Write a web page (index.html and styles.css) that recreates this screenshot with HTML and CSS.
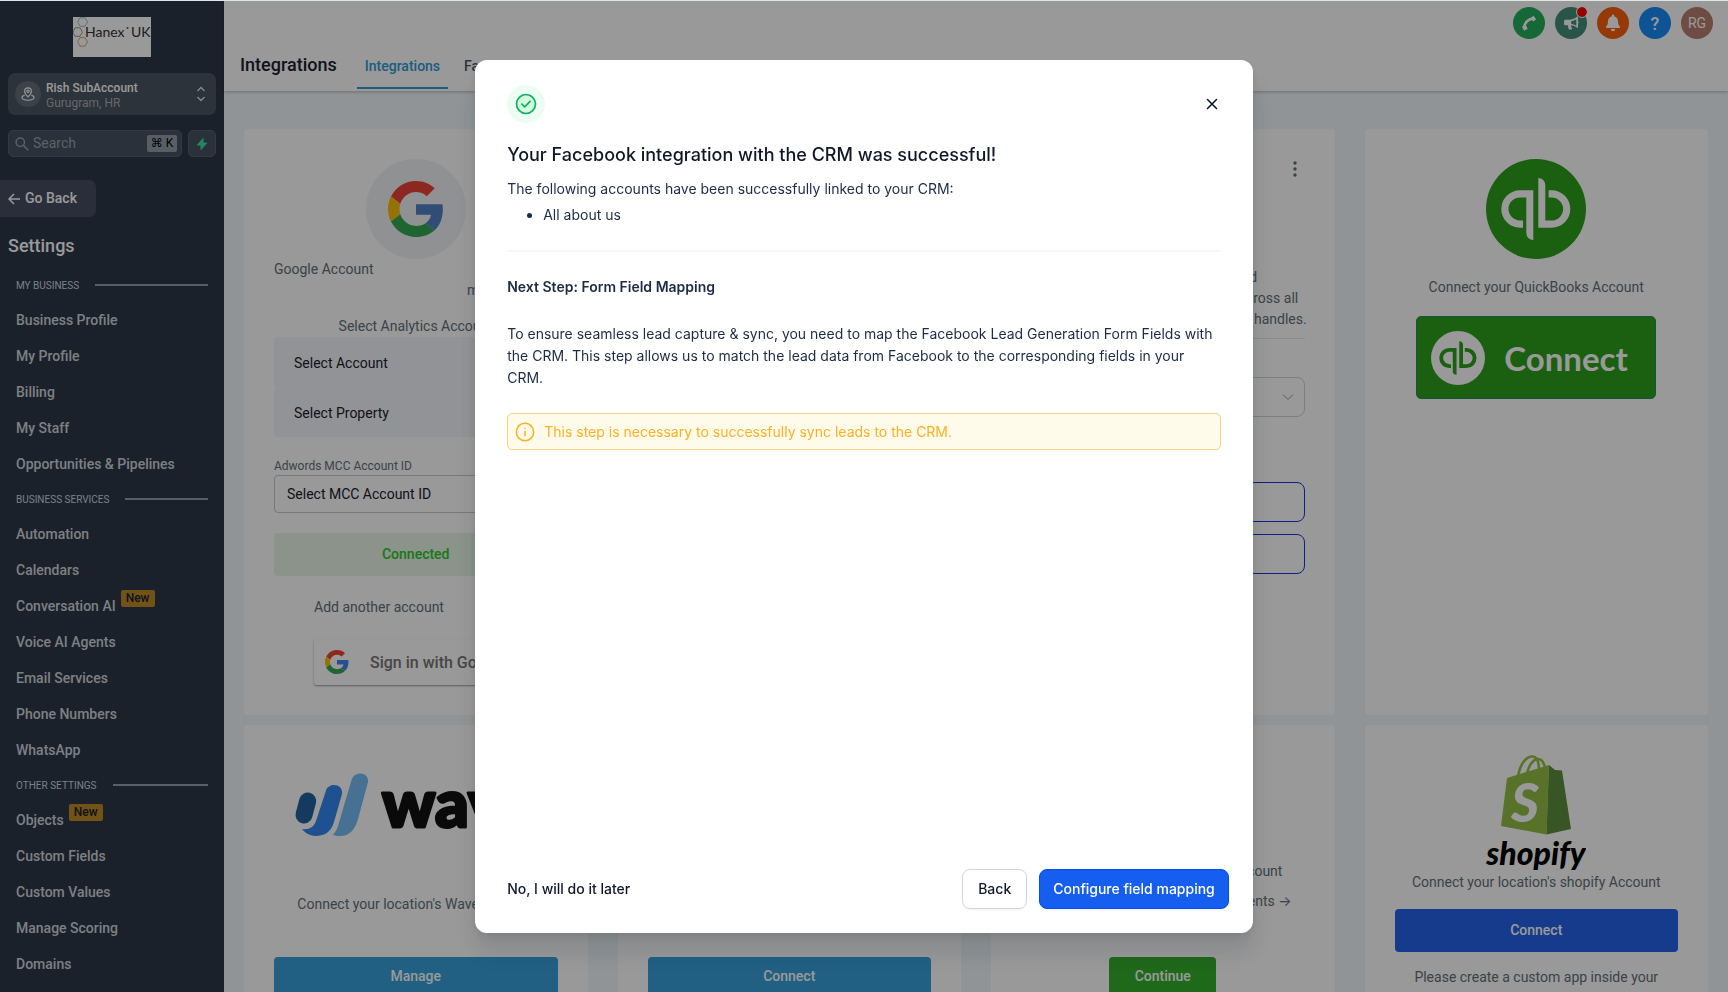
FILE: index.html
```html
<!DOCTYPE html>
<html lang="en">
<head>
<meta charset="utf-8">
<title>Integrations</title>
<link rel="stylesheet" href="styles.css">
</head>
<body>
<svg class="defs" aria-hidden="true">
  <symbol id="google" viewBox="0 0 48 48">
    <path fill="#ea4335" d="M24 9.5c3.54 0 6.71 1.22 9.21 3.6l6.85-6.85C35.9 2.38 30.47 0 24 0 14.62 0 6.51 5.38 2.56 13.22l7.98 6.19C12.43 13.72 17.74 9.5 24 9.5z"/>
    <path fill="currentColor" d="M46.98 24.55c0-1.57-.15-3.09-.38-4.55H24v9.02h12.94c-.58 2.96-2.26 5.48-4.78 7.18l7.73 6c4.51-4.18 7.09-10.36 7.09-17.65z"/>
    <path fill="#fbbc05" d="M10.53 28.59c-.48-1.45-.76-2.99-.76-4.59s.27-3.14.76-4.59l-7.98-6.19C.92 16.46 0 20.12 0 24c0 3.88.92 7.54 2.56 10.78l7.97-6.19z"/>
    <path fill="#34a853" d="M24 48c6.48 0 11.93-2.13 15.89-5.81l-7.73-6c-2.15 1.45-4.92 2.3-8.16 2.3-6.26 0-11.57-4.22-13.47-9.91l-7.98 6.19C6.51 42.62 14.62 48 24 48z"/>
  </symbol>
  <symbol id="qb-half" viewBox="0 0 100 100">
    <path fill="currentColor" d="M47.3 31.3H34a18.7 18.7 0 0 0 0 37.4h3v-7.3h-3a11.5 11.5 0 0 1 0-23h6.3V74a7 7 0 0 0 7 7z"/>
  </symbol>
  <symbol id="qb" viewBox="0 0 100 100">
    <use href="#qb-half" width="100" height="100"/>
    <use href="#qb-half" width="100" height="100" transform="rotate(180 49.8 50)"/>
  </symbol>
</svg>

<div class="app">
  <aside class="sidebar">
    <svg class="brand" width="78" height="40" viewBox="0 0 78 40" role="img" aria-label="Hanex UK">
      <rect width="78" height="40" fill="#fff"/>
      <g fill="none" stroke-width="1">
        <path stroke="#8fc9b2" d="M7 .8 12 .8 14.5 5 12 9.3H7L4.700 5z"/>
        <path stroke="#999" d="M2 10.800h5l2.400 4.300L7 19.300H2L0 15.100z"/>
        <path stroke="#e0a96a" d="M7 20.600h5l2.500 4.300L12 29.200H7l-2.300-4.300z"/>
      </g>
      <text x="12" y="20" class="brand-text">Hanex</text>
      <circle cx="54.500" cy="11" r="1" fill="#555"/>
      <text x="58" y="20" class="brand-text">UK</text>
    </svg>

    <button class="account" type="button">
      <span class="account-pin">
        <svg width="14" height="14" viewBox="0 0 14 14" fill="none" stroke="currentColor" stroke-width="1.100">
          <path d="M7 9.800C5 8 3.600 6.500 3.600 4.300a3.400 3.400 0 0 1 6.800 0C10.400 6.500 9 8 7 9.800z"/>
          <circle cx="7" cy="4.300" r="1.200"/>
          <path d="M3.700 8.300C2 8.700 1 9.600 1 10.600 1 12 3.600 13.200 7 13.200s6-1.200 6-2.600c0-1-1-1.900-2.700-2.300"/>
        </svg>
      </span>
      <span class="account-text"><b>Rish SubAccount</b><span>Gurugram, HR</span></span>
      <svg class="account-caret" width="10" height="16" viewBox="0 0 10 16" fill="none" stroke="currentColor" stroke-width="1.300"><path d="m1.500 5 3.500-3.500L8.500 5M1.500 11 5 14.500 8.500 11"/></svg>
    </button>

    <div class="search-row">
      <label class="search">
        <svg width="14" height="14" viewBox="0 0 14 14" fill="none" stroke="currentColor" stroke-width="1.500"><circle cx="5.300" cy="5.300" r="4.200"/><path d="m8.500 8.500 4.800 4.800"/></svg>
        <input type="text" placeholder="Search" aria-label="Search">
        <kbd>⌘ K</kbd>
      </label>
      <button class="bolt" type="button" aria-label="Quick actions">
        <svg width="12" height="14" viewBox="0 0 12 14" fill="currentColor" stroke="currentColor" stroke-linejoin="round"><path d="M7 1.500 1.300 8H5v4.500L10.700 6H7z"/></svg>
      </button>
    </div>

    <button class="back" type="button">
      <svg width="12" height="12" viewBox="0 0 12 12" fill="none" stroke="currentColor" stroke-width="1.500"><path d="M12 6H1M6 1 1 6l5 5"/></svg>
      Go Back
    </button>

    <h2 class="settings">Settings</h2>
    <nav class="nav">
      <h3>MY BUSINESS</h3>
      <a href="#">Business Profile</a>
      <a href="#">My Profile</a>
      <a href="#">Billing</a>
      <a href="#">My Staff</a>
      <a href="#">Opportunities &amp; Pipelines</a>
      <h3>BUSINESS SERVICES</h3>
      <a href="#">Automation</a>
      <a href="#">Calendars</a>
      <a href="#">Conversation AI <span class="new">New</span></a>
      <a href="#">Voice AI Agents</a>
      <a href="#">Email Services</a>
      <a href="#">Phone Numbers</a>
      <a href="#">WhatsApp</a>
      <h3>OTHER SETTINGS</h3>
      <a href="#">Objects <span class="new">New</span></a>
      <a href="#">Custom Fields</a>
      <a href="#">Custom Values</a>
      <a href="#">Manage Scoring</a>
      <a href="#">Domains</a>
    </nav>
  </aside>

  <div class="main">
    <header class="header">
      <h1>Integrations</h1>
      <nav class="tabs">
        <a href="#" class="active">Integrations</a>
        <a href="#">Facebook Form Fields Mapping</a>
      </nav>
      <div class="actions">
        <button type="button" class="round phone" aria-label="Phone">
          <svg width="16" height="16" viewBox="0 0 16 16" fill="none" stroke="currentColor" stroke-linecap="round"><path stroke-width="2.600" d="M3.200 12.800C3.200 7.600 7.600 3.600 12.600 3.600"/><path stroke-width="4.400" stroke-linecap="butt" d="m2 13.800 3.700-2M11 4.700l2.800-2.200"/></svg>
        </button>
        <button type="button" class="round news" aria-label="Announcements">
          <svg width="16" height="16" viewBox="0 0 16 16"><path fill="currentColor" fill-rule="evenodd" d="M14.300 1.600c.5-.1.700.2.700.6v4c.8.300.8 2 0 2.400v3.800c0 .5-.4.700-.8.400-1.800-1.500-4-2.400-6.200-2.500.1 1.200.4 2.400 1 3.400.2.400 0 .8-.5.800H6.200c-.3 0-.5-.2-.6-.5-.4-1.200-.6-2.500-.5-3.700H2.600C1.700 10.300 1 9.600 1 8.700V6.300c0-.9.700-1.600 1.600-1.600H7c2.600 0 5.300-1.300 7.300-3.100zM13.300 4.200C11.700 5.300 9.800 6 8.200 6.200v2.600c1.700.2 3.500.9 5.100 1.900z"/></svg>
          <span class="dot"></span>
        </button>
        <button type="button" class="round bell" aria-label="Notifications">
          <svg width="16" height="18" viewBox="0 0 16 18" fill="currentColor"><path d="M8 .5c.7 0 1.100.5 1.100 1.100v.6c2.400.5 3.900 2.500 3.900 5 0 2.900.7 3.900 1.800 5.200.6.700.1 1.600-.8 1.600H2c-.9 0-1.400-.9-.8-1.600C2.300 11.100 3 10.100 3 7.200c0-2.500 1.500-4.500 3.900-5v-.6C6.900 1 7.300.5 8 .5zM5.800 15h4.400a2.200 2.200 0 0 1-4.400 0z"/></svg>
        </button>
        <button type="button" class="round help" aria-label="Help">?</button>
        <button type="button" class="round avatar">RG</button>
      </div>
    </header>

    <main class="grid">
      <section class="card google-card">
        <div class="logo-circle"><svg width="56" height="56"><use href="#google"/></svg></div>
        <p>Google Account</p>
        <p class="mail">me@account.com</p>
        <p class="analytics">Select Analytics Account</p>
        <select class="flat" aria-label="Account"><option>Select Account</option></select>
        <select class="flat" aria-label="Property"><option>Select Property</option></select>
        <label class="small-label" for="mcc">Adwords MCC Account ID</label>
        <select class="outlined" id="mcc"><option>Select MCC Account ID</option></select>
        <div class="connected">Connected</div>
        <p class="another">Add another account</p>
        <button type="button" class="google-signin"><svg width="24" height="24"><use href="#google"/></svg>Sign in with Google</button>
      </section>

      <section class="card"></section>

      <section class="card facebook-card">
        <button type="button" class="kebab" aria-label="More">
          <svg width="4" height="16" viewBox="0 0 4 16" fill="currentColor"><circle cx="2" cy="2" r="1.700"/><circle cx="2" cy="8" r="1.700"/><circle cx="2" cy="14" r="1.700"/></svg>
        </button>
        <div class="logo-space"></div>
        <p class="about">Link your Facebook pages and<br>Instagram, to track conversations across all<br>your locations, pages and your social handles.</p>
        <hr>
        <div class="select-wrap">
          <select class="rounded" aria-label="Page"><option></option></select>
          <svg width="12" height="8" viewBox="0 0 12 8" fill="none" stroke="currentColor"><path d="m1 1.500 5 5 5-5"/></svg>
        </div>
        <button type="button" class="outline-blue first" aria-label="Manage pages"></button>
        <button type="button" class="outline-blue" aria-label="Manage forms"></button>
      </section>

      <section class="card center">
        <svg class="qb-logo" width="100" height="100" viewBox="0 0 100 100" role="img" aria-label="QuickBooks"><circle cx="50" cy="50" r="50" fill="#2ca01c"/><use href="#qb" width="100" height="100"/></svg>
        <p class="qb-text">Connect your QuickBooks Account</p>
        <button type="button" class="qb-connect">
          <svg width="54" height="54" viewBox="0 0 100 100"><circle cx="50" cy="50" r="50" fill="#fff"/><use href="#qb" width="100" height="100"/></svg>
          Connect
        </button>
      </section>

      <section class="card center">
        <svg class="wave" width="242" height="64" viewBox="0 0 242 64" role="img" aria-label="Wave">
          <path stroke="#22629f" stroke-width="17" stroke-linecap="round" d="M12.700 28 9 42"/>
          <path fill="#3488f0" d="M31 17.500c2.500-8 17.500-7.500 16 3.500L39 49c-3 11-11 14-18 14-6 0-11-3-14-7 7 1 12-2 14-8z"/>
          <path fill="#76bdf5" d="M56.500 7C60-3.500 74.500-.5 73 9L63 46c-3 11-9 17-18 17-3 0-5-.5-7-1.500 2-1.500 4-5 5-8.500z"/>
          <text x="87" y="54" class="wave-text">wave</text>
        </svg>
        <p class="wave-caption">Connect your location's Wave Account</p>
        <button type="button" class="btn sky">Manage</button>
      </section>

      <section class="card center end">
        <button type="button" class="btn sky">Connect</button>
      </section>

      <section class="card center end">
        <p>Connect your location's Stripe Account</p>
        <p class="pay">Manage providers from your Payments <span class="arrow">→</span></p>
        <button type="button" class="btn green">Continue</button>
      </section>

      <section class="card center">
        <svg class="shopify" width="100" height="117" viewBox="0 0 100 117" role="img" aria-label="Shopify">
          <g fill="none" stroke="#95bf47" stroke-width="2.600"><path d="M32 22C34 8 41 1 47 1.500c4 .5 6 5 6 14"/><path d="M41 19C43 9 48 4 52 4s6 4 7 9"/></g>
          <path fill="#95bf47" d="m21 23 42-13-2.500 69.500L15 71z"/>
          <path fill="#5e8e3e" d="m63 10 6 5 7 .5L85 74l-24.500 5.500z"/>
          <text x="25" y="67" class="bag-letter">S</text>
          <text x="50" y="110" text-anchor="middle" class="shopify-text">shopify</text>
        </svg>
        <p>Connect your location's shopify Account</p>
        <button type="button" class="btn blue">Connect</button>
        <p class="custom">Please create a custom app inside your</p>
      </section>
    </main>
  </div>
</div>

<div class="overlay">
  <div class="modal" role="dialog" aria-modal="true" aria-labelledby="modal-title">
    <div class="modal-top">
      <span class="success">
        <svg width="22" height="22" viewBox="0 0 22 22" fill="none" stroke="currentColor" stroke-width="1.700" stroke-linecap="round" stroke-linejoin="round"><circle cx="11" cy="11" r="9.500" fill="#d1fadf"/><path d="m6.800 11 2.900 2.800 5.400-5.400"/></svg>
      </span>
      <button type="button" class="close" aria-label="Close">
        <svg width="12" height="12" viewBox="0 0 12 12" fill="none" stroke="currentColor" stroke-width="1.600" stroke-linecap="round"><path d="m1.500 1.500 9 9M10.500 1.500l-9 9"/></svg>
      </button>
    </div>
    <div class="modal-body">
      <h2 id="modal-title">Your Facebook integration with the CRM was successful!</h2>
      <p>The following accounts have been successfully linked to your CRM:</p>
      <ul><li>All about us</li></ul>
      <hr>
      <h3>Next Step: Form Field Mapping</h3>
      <p>To ensure seamless lead capture &amp; sync, you need to map the Facebook Lead Generation Form Fields with the CRM. This step allows us to match the lead data from Facebook to the corresponding fields in your CRM.</p>
      <div class="notice">
        <svg width="20" height="20" viewBox="0 0 20 20" fill="none" stroke="currentColor" stroke-width="1.500" stroke-linecap="round"><circle cx="10" cy="10" r="8.700"/><path d="M10 9.500v4.300M10 6.300v.2"/></svg>
        This step is necessary to successfully sync leads to the CRM.
      </div>
    </div>
    <footer class="modal-footer">
      <button type="button" class="later">No, I will do it later</button>
      <button type="button" class="secondary">Back</button>
      <button type="button" class="primary">Configure field mapping</button>
    </footer>
  </div>
</div>
</body>
</html>
```

FILE: styles.css
```css
* { box-sizing: border-box; }
body {
  margin: 0;
  height: 100vh;
  overflow: hidden;
  border-top: 1px solid #dfe7e4;
  font: 14px/21px Roboto, sans-serif;
  color: #607179;
}
h1, h2, h3, p, ul { margin: 0; padding: 0; }
button, input, select { font: inherit; color: inherit; margin: 0; }
button { border: 0; padding: 0; background: none; cursor: pointer; }
a { color: inherit; text-decoration: none; }
svg { display: block; flex: none; }
.defs { position: absolute; width: 0; height: 0; }
.app { display: flex; height: 100%; }

/* Sidebar */
.sidebar {
  width: 224px;
  flex: none;
  overflow: hidden;
  padding-top: 16px;
  background: #2d3748;
  color: #d1d5db;
  display: flex;
  flex-direction: column;
}
.brand { align-self: center; }
.brand-text { font: 14px Lato, sans-serif; fill: #333; }
.account {
  margin: 16px 8px 0;
  height: 42px;
  padding: 0 10px 0 7px;
  border-radius: 7px;
  background: #4a5563;
  display: flex;
  align-items: center;
  text-align: left;
  flex: none;
}
.account-pin {
  width: 26px;
  height: 26px;
  margin-right: 5px;
  border-radius: 50%;
  background: #656e7a;
  display: grid;
  place-items: center;
  color: #fff;
}
.account-text { flex: 1; display: flex; flex-direction: column; padding-top: 4px; font-size: 12px; line-height: 15px; color: #a7adb6; }
.account-text b { font-weight: 500; color: #fff; }
.account-caret { color: #e2e5ea; }
.search-row { display: flex; gap: 6px; margin: 15px 8px 0; flex: none; }
.search, .bolt { height: 27px; border: 1px solid #566170; border-radius: 5px; background: #485361; }
.search { flex: 1; min-width: 0; display: flex; align-items: center; gap: 4px; padding: 0 4px 0 6px; color: #99a1ad; }
.search input { flex: 1; min-width: 0; border: 0; padding: 0; background: none; outline: 0; }
.search input::placeholder { color: #99a1ad; opacity: 1; }
.search kbd {
  width: 30px;
  font: 12px/17px Roboto, "DejaVu Sans", sans-serif;
  text-align: center;
  color: #000;
  background: #959dab;
  border-radius: 2px;
}
.bolt { width: 28px; display: grid; place-items: center; color: #3fdfa0; }
.back {
  align-self: flex-start;
  width: 96px;
  height: 37px;
  margin-top: 23px;
  padding-left: 8px;
  display: flex;
  align-items: center;
  gap: 5px;
  font-weight: 500;
  color: #fff;
  background: #464d63;
  border-radius: 0 7px 7px 0;
  flex: none;
}
.settings { margin: 17px 8px 10px; font-size: 18px; line-height: 24px; font-weight: 500; color: #fff; }
.nav { padding: 0 16px; display: flex; flex-direction: column; }
.nav h3 { display: flex; align-items: center; gap: 16px; height: 34px; font-size: 10px; font-weight: 400; color: #cbd5e0; }
.nav h3::after { content: ""; flex: 1; height: 2px; background: #969eac; }
.nav a { height: 36px; line-height: 36px; font-weight: 500; display: flex; gap: 5px; }
.new {
  height: 17px;
  margin-top: 2px;
  padding: 0 5px;
  font-size: 12px;
  line-height: 17px;
  border-radius: 2px;
  color: #1a202c;
  background: #bd8a28;
}

/* Header */
.main { flex: 1; min-width: 0; display: flex; flex-direction: column; background: #f0f7fa; }
.header {
  height: 90px;
  flex: none;
  padding-left: 16px;
  display: flex;
  align-items: flex-end;
  background: #fff;
  box-shadow: 0 1px 3px rgba(0, 0, 0, .25);
}
.header h1 { margin: 0 20px 14px 0; font-size: 18px; line-height: 24px; font-weight: 500; color: #1a202c; }
.tabs { display: flex; gap: 8px; margin-bottom: 2px; font-weight: 500; color: #4a5568; }
.tabs a { padding: 0 8px 11px; line-height: 20px; border-bottom: 2px solid transparent; }
.tabs .active { color: #2f9bd5; border-color: #2f9bd5; }
.actions { align-self: flex-start; display: flex; gap: 10px; margin-left: auto; padding: 6px 15px 0 0; }
.round { position: relative; width: 32px; height: 32px; border-radius: 50%; display: grid; place-items: center; color: #fff; }
.phone { background: #27ae5c; }
.news { background: #448e79; }
.bell { background: #f8620c; }
.help { background: #188bf6; font-size: 18px; font-weight: 500; }
.avatar { background: #b97f71; }
.dot { position: absolute; top: 0; right: 0; width: 10px; height: 10px; border-radius: 50%; background: #f00; outline: 1px solid #fff; }

/* Cards */
.grid {
  flex: 1;
  min-height: 0;
  overflow: hidden;
  padding: 38px 20px 20px;
  display: grid;
  grid-template-columns: repeat(4, minmax(0, 1fr));
  align-content: start;
  gap: 10px 30px;
}
.card { position: relative; padding: 30px; border-radius: 4px; background: #fff; display: flex; flex-direction: column; }
.center { align-items: center; text-align: center; }
.end { justify-content: flex-end; }
.logo-circle { align-self: center; width: 100px; height: 100px; border-radius: 50%; background: #eff2f6; display: grid; place-items: center; color: #4f80c4; }
.mail { margin-left: 193px; white-space: nowrap; }
.analytics { margin-top: 15px; text-align: center; }
select { appearance: none; width: 100%; }
.flat { height: 50px; border: 0; border-radius: 4px; padding: 3px 20px 0; background: #f3f6fa; color: #1a202c; }
.small-label { margin-top: 20px; font-size: 12px; line-height: 18px; }
.outlined { height: 38px; padding: 0 12px; border: 1px solid #c3c8cf; border-radius: 4px; background: #fff; color: #1a202c; }
.connected { margin-top: 20px; height: 43px; line-height: 43px; text-align: center; font-weight: 500; border-radius: 4px; color: #28c828; background: #e8f6e6; }
.another { margin: 21px 40px 0; }
.google-signin {
  margin: 21px 40px 0;
  height: 46px;
  padding-left: 11px;
  display: flex;
  align-items: center;
  gap: 21px;
  font-size: 16px;
  font-weight: 500;
  white-space: nowrap;
  color: #757575;
  border-radius: 2px;
  box-shadow: 0 1px 2px rgba(0, 0, 0, .4);
}
.google-signin svg { color: #4285f4; }
.kebab { position: absolute; top: 32px; right: 38px; color: #607179; }
.logo-space { height: 100px; margin-bottom: 8px; }
.about { text-align: center; white-space: nowrap; }
.card hr { width: 100%; margin: 8px 0 38px; border: 0; border-top: 1px solid #dfe9ee; }
.select-wrap { position: relative; }
.select-wrap svg { position: absolute; right: 11px; top: 16px; color: #999fa8; }
.rounded { display: block; height: 40px; border: 1px solid #cfd3d8; border-radius: 8px; background: #fff; }
.outline-blue { height: 40px; margin-top: 12px; border: 1px solid #0a3ce0; border-radius: 8px; }
.outline-blue.first { margin-top: 65px; }
.qb-logo { color: #fff; }
.qb-text { margin: 18px 0; }
.qb-connect {
  width: 240px;
  height: 83px;
  padding-left: 14px;
  display: flex;
  align-items: center;
  gap: 19px;
  font: bold 33px Lato, sans-serif;
  color: #fff;
  background: #2ca01c;
  border: 1px solid #2a8a60;
  border-radius: 5px;
}
.qb-connect svg { color: #2ca01c; }
.btn { width: 100%; height: 38px; border-radius: 4px; font-weight: 500; color: #fff; }
.sky { background: #37a0da; }
.green { width: 107px; background: #34af2d; }
.blue { height: 43px; margin: 16px 0 15px; background: #2563eb; }
.wave { margin-top: 18px; overflow: visible; }
.wave-text { font: 900 66px Lato, sans-serif; fill: #111; stroke: #111; stroke-width: 3px; stroke-linejoin: round; }
.wave-caption { margin: 57px 0 42px; }
.pay { margin: 8px 0 45px; white-space: nowrap; }
.arrow { font-family: Inter, sans-serif; }
.bag-letter { font: italic 900 54px Lato, sans-serif; fill: #fff; }
.shopify-text { font: italic 900 32px Lato, sans-serif; fill: #000; }
.custom { white-space: nowrap; }

/* Modal */
.overlay {
  position: fixed;
  inset: 1px 0 0;
  display: grid;
  place-items: center;
  background: rgba(0, 0, 0, .4);
}
.modal {
  width: 45%;
  height: 88%;
  padding: 25px 32px 24px;
  display: flex;
  flex-direction: column;
  background: #fff;
  border-radius: 12px;
  box-shadow: 0 20px 24px rgba(16, 24, 40, .12), 0 4px 10px rgba(16, 24, 40, .08);
  font: 14px/22px Inter, sans-serif;
  color: #1d2b45;
}
.modal-top { display: flex; justify-content: space-between; align-items: center; }
.success { width: 38px; height: 38px; border-radius: 50%; background: #ecfdf3; color: #12b05c; display: grid; place-items: center; }
.close { padding: 3px; color: #101828; }
.modal-body { flex: 1; }
.modal-body h2 { margin: 18px 0 9px; font-size: 18px; line-height: 28px; font-weight: 500; color: #101828; }
.modal-body ul { margin-top: 4px; padding-left: 36px; }
.modal-body hr { margin: 24px 0; border: 0; border-top: 2px solid #f5f8fc; }
.modal-body h3 { margin-bottom: 25px; font-size: 14px; line-height: 22px; font-weight: 600; }
.notice {
  margin-top: 24px;
  min-height: 37px;
  padding: 0 7px;
  display: flex;
  align-items: center;
  gap: 9px;
  color: #fdb022;
  background: #fffbeb;
  border: 1px solid #fbd37a;
  border-radius: 5px;
}
.modal-footer { display: flex; align-items: center; gap: 12px; margin-right: -8px; font-weight: 500; color: #101828; }
.later { margin-right: auto; }
.secondary, .primary { height: 40px; border-radius: 8px; box-shadow: 0 1px 2px rgba(16, 24, 40, .05); }
.secondary { padding: 0 15px; border: 1px solid #d0d5dd; }
.primary { padding: 0 13px; border: 1px solid #004eeb; color: #fff; background: #155eef; }
```
